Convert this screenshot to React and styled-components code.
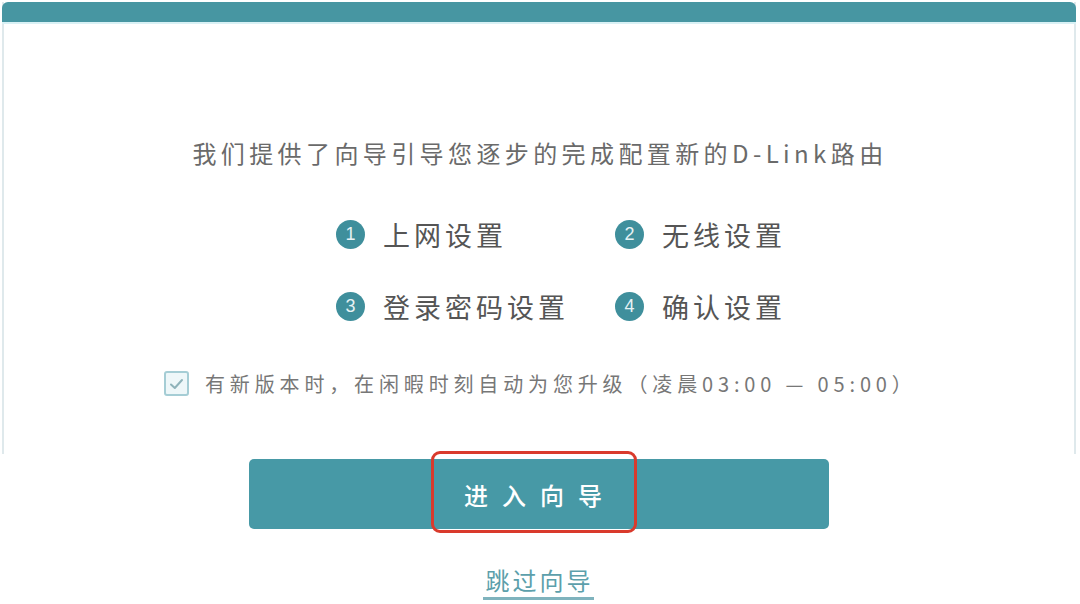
import React from 'react';
import styled, { createGlobalStyle } from 'styled-components';

const GlobalStyle = createGlobalStyle`
  html, body {
    margin: 0;
    padding: 0;
    background: #ffffff;
  }
  body {
    font-family: "Noto Sans CJK SC", "Noto Sans", sans-serif;
  }
`;

const Page = styled.div`
  width: 1080px;
  height: 604px;
  overflow: hidden;
  display: flex;
  flex-direction: column;
  align-items: center;
`;

const Panel = styled.div`
  box-sizing: border-box;
  width: 1074px;
  height: 452px;
  margin: 2px 0 0 2px;
  align-self: flex-start;
  border-left: 2px solid #dfe9ec;
  border-right: 2px solid #dfe9ec;
  display: flex;
  flex-direction: column;
  align-items: center;
`;

const TopBar = styled.div`
  width: calc(100% + 4px);
  margin: 0 -2px;
  height: 20px;
  background: #4796a2;
  border-radius: 6px 6px 0 0;
  border-bottom: 2px solid #d9f1f5;
`;

const Intro = styled.p`
  margin: 107px 0 0 2px;
  font-size: 24px;
  letter-spacing: 4.4px;
  color: #6a6a6a;
  line-height: 44px;
`;

const Steps = styled.div`
  display: grid;
  grid-template-columns: 279px 200px;
  row-gap: 28px;
  margin: 37px 0 0 73px;
`;

const Step = styled.div`
  display: flex;
  align-items: center;
  gap: 18px;
  height: 44px;
`;

const Badge = styled.span`
  width: 29px;
  height: 29px;
  border-radius: 50%;
  background: #3f8f9c;
  color: #e6f2f4;
  font-family: "Liberation Sans", Arial, sans-serif;
  font-size: 18px;
  display: flex;
  align-items: center;
  justify-content: center;
  flex-shrink: 0;
`;

const StepLabel = styled.span`
  font-size: 27px;
  letter-spacing: 4px;
  color: #555555;
`;

const UpgradeRow = styled.label`
  display: flex;
  align-items: center;
  gap: 16px;
  margin: 41px 0 0 160px;
  align-self: flex-start;
`;

const Check = styled.span`
  box-sizing: border-box;
  width: 25px;
  height: 25px;
  border: 2px solid #a5cdd5;
  border-radius: 3px;
  background: #eef7f9;
  display: flex;
  align-items: center;
  justify-content: center;
`;

const UpgradeText = styled.span`
  font-size: 20px;
  letter-spacing: 4.85px;
  color: #777777;
`;

const EnterButton = styled.button`
  position: relative;
  align-self: flex-start;
  margin: 5px 0 0 249px;
  width: 580px;
  height: 70px;
  border: none;
  border-radius: 5px;
  background: #4799a6;
  color: #ffffff;
  font-family: "Noto Sans CJK SC", sans-serif;
  font-size: 24px;
  font-weight: 500;
  letter-spacing: 14px;
  padding: 0 0 0 2px;
  cursor: pointer;
`;

const Highlight = styled.span`
  position: absolute;
  left: 182px;
  top: -8px;
  width: 206px;
  height: 82px;
  box-sizing: border-box;
  border: 3.5px solid #d93a2c;
  border-radius: 9px;
  pointer-events: none;
`;

const SkipLink = styled.a`
  margin-top: 36px;
  font-size: 24px;
  letter-spacing: 3px;
  color: #5c9fab;
  text-decoration: none;
  border-bottom: 3px solid #7fb3bd;
  line-height: 30px;
  padding: 0 0 2px 3px;
  margin-left: -4px;
  cursor: pointer;
`;

const steps = [
  { n: 1, label: '上网设置' },
  { n: 2, label: '无线设置' },
  { n: 3, label: '登录密码设置' },
  { n: 4, label: '确认设置' },
];

export default function App() {
  return (
    <Page>
      <GlobalStyle />
      <Panel>
        <TopBar />
        <Intro>我们提供了向导引导您逐步的完成配置新的D-Link路由</Intro>
        <Steps>
          {steps.map((s) => (
            <Step key={s.n}>
              <Badge>{s.n}</Badge>
              <StepLabel>{s.label}</StepLabel>
            </Step>
          ))}
        </Steps>
        <UpgradeRow>
          <Check>
            <svg width="15" height="12" viewBox="0 0 15 12">
              <path d="M2 6.5 L5.8 10 L13 2" fill="none" stroke="#8fb3ba" strokeWidth="2" strokeLinecap="round" strokeLinejoin="round" />
            </svg>
          </Check>
          <UpgradeText>有新版本时，在闲暇时刻自动为您升级（凌晨03:00 — 05:00）</UpgradeText>
        </UpgradeRow>
      </Panel>
      <EnterButton>
        进入向导
        <Highlight />
      </EnterButton>
      <SkipLink>跳过向导</SkipLink>
    </Page>
  );
}
